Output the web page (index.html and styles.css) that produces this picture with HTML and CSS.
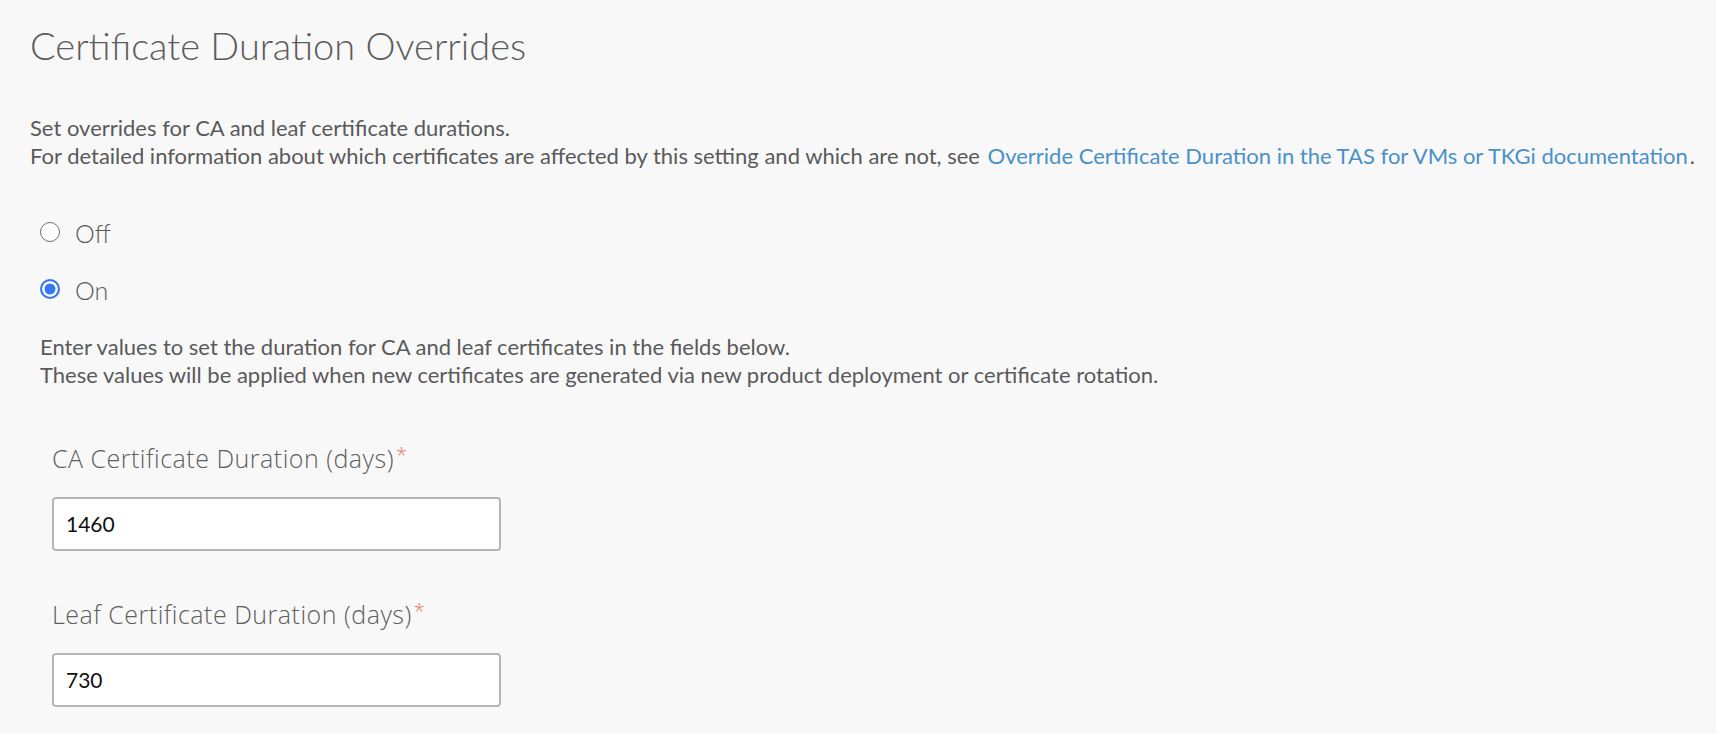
FILE: index.html
```html
<!DOCTYPE html>
<html lang="en">
<head>
<meta charset="utf-8">
<title>Certificate Duration Overrides</title>
<link rel="stylesheet" href="styles.css">
</head>
<body>
<main class="page">
  <h1 class="title">Certificate Duration Overrides</h1>
  <p class="intro">Set overrides for CA and leaf certificate durations.<br>For detailed information about which certificates are affected by this setting and which are not, see <a class="link" href="#">Override Certificate Duration in the TAS for VMs or TKGi documentation</a>.</p>
  <div class="radios">
    <label class="radio"><span class="dot"></span><span class="radio-text">Off</span></label>
    <label class="radio"><span class="dot dot-on"></span><span class="radio-text">On</span></label>
  </div>
  <p class="helper">Enter values to set the duration for CA and leaf certificates in the fields below.<br>These values will be applied when new certificates are generated via new product deployment or certificate rotation.</p>
  <div class="fields">
    <div class="field">
      <div class="field-label">CA Certificate Duration (days)<span class="req">*</span></div>
      <div class="input">1460</div>
    </div>
    <div class="field">
      <div class="field-label">Leaf Certificate Duration (days)<span class="req">*</span></div>
      <div class="input">730</div>
    </div>
  </div>
</main>
</body>
</html>
```
FILE: styles.css
```css
* { box-sizing: border-box; }
html, body { margin: 0; padding: 0; }
body {
  background: #f8f8f8;
  font-family: Lato, "Open Sans", sans-serif;
  color: #5a5a5a;
  height: 734px;
  overflow: hidden;
}
.page {
  padding: 22px 0 0 30px;
}
.title {
  margin: 0;
  font-size: 38px;
  font-weight: 300;
  line-height: 46px;
  color: #5c5c5c;
}
.intro {
  margin: 46px 0 0 0;
  font-size: 22px;
  line-height: 28.4px;
  font-weight: 400;
}
.link {
  color: #4a90c9;
  text-decoration: none;
  margin-left: 2px;
  margin-right: 2px;
}
.radios {
  margin-top: 45px;
  display: flex;
  flex-direction: column;
  gap: 23px;
  padding-left: 10px;
}
.radio {
  display: flex;
  align-items: center;
  gap: 15px;
  height: 34px;
  font-size: 25px;
  font-weight: 300;
  line-height: 34px;
}
.dot {
  width: 20px;
  height: 20px;
  border-radius: 50%;
  border: 1.5px solid #6e6e6e;
  background: #fff;
  flex: none;
  margin-top: -2px;
}
.dot-on {
  border: 2px solid #3478f6;
  background: #3478f6;
  box-shadow: inset 0 0 0 2.5px #fff;
}
.helper {
  margin: 26px 0 0 10px;
  font-size: 22px;
  line-height: 28.5px;
}
.fields {
  margin-top: 50px;
  padding-left: 22px;
  display: flex;
  flex-direction: column;
  gap: 45px;
}
.field {
  display: flex;
  flex-direction: column;
  gap: 24px;
}
.field-label {
  font-family: "Open Sans", Lato, sans-serif;
  font-size: 25px;
  font-weight: 300;
  letter-spacing: 0.5px;
  line-height: 30px;
  color: #5e5e5e;
}
.req {
  color: #e8716a;
  font-size: 20px;
  vertical-align: 6px;
  margin-left: 2px;
}
.input {
  width: 449px;
  height: 54px;
  background: #fff;
  border: 2px solid #b5b5b5;
  border-radius: 4px;
  padding-left: 12px;
  display: flex;
  align-items: center;
  font-size: 21px;
  color: #111;
}
```
